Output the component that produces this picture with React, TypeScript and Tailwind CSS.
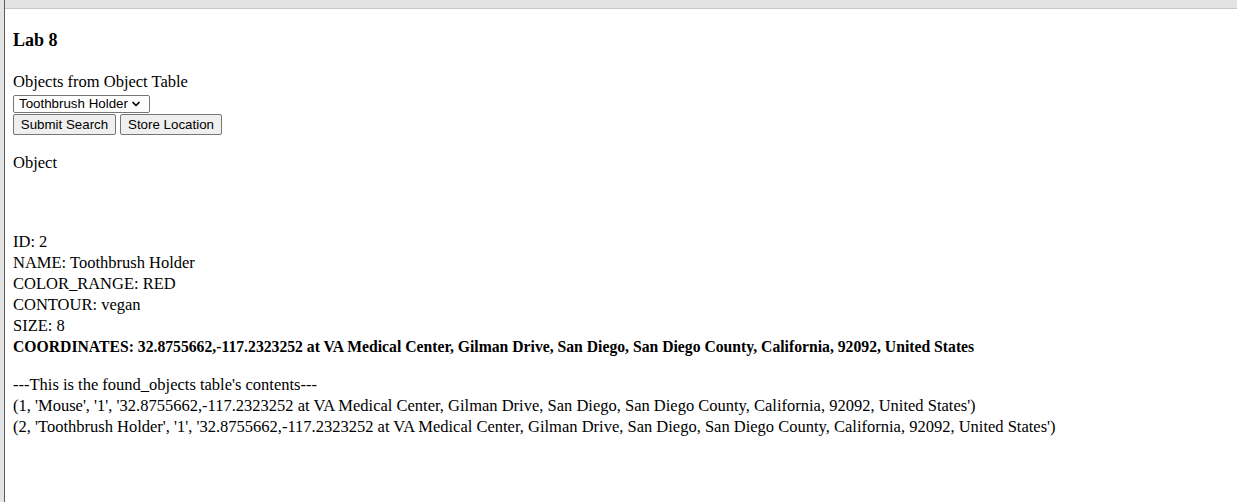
import { ChevronDown } from "lucide-react";

const rows = [
  "(1, 'Mouse', '1', '32.8755662,-117.2323252 at VA Medical Center, Gilman Drive, San Diego, San Diego County, California, 92092, United States')",
  "(2, 'Toothbrush Holder', '1', '32.8755662,-117.2323252 at VA Medical Center, Gilman Drive, San Diego, San Diego County, California, 92092, United States')",
];

export default function App() {
  return (
    <div className="flex h-[502px] w-full bg-white overflow-hidden">
      {/* window chrome edge */}
      <div className="w-[4px] shrink-0 bg-[#e4e4e4]" />
      <div className="w-px shrink-0 bg-[#5c5c5c]" />

      <div className="flex-1 flex flex-col">
        <div className="h-[9px] shrink-0 bg-[#e3e3e3] border-b border-[#c6c6c6]" />

        <div className="pl-[8px] text-black font-['Liberation_Serif',serif] text-[16.5px] leading-[21px]">
          <h3 className="mt-[19px] text-[18px] leading-[24px] font-bold">Lab 8</h3>

          <div className="mt-[19px]">Objects from Object Table</div>

          <div className="mt-[3px] flex h-[18px] w-[137px] items-center justify-between rounded-[2px] border border-[#767676] bg-white pl-[5px] pr-[7px] font-['Liberation_Sans',sans-serif] text-[13.33px] leading-none">
            <span>Toothbrush Holder</span>
            <ChevronDown className="h-[12px] w-[12px]" strokeWidth={3.5} />
          </div>

          <div className="mt-[1px] flex gap-[4px] font-['Liberation_Sans',sans-serif] text-[13.33px] leading-none">
            <button className="h-[21px] w-[103px] rounded-[2px] border border-[#767676] bg-[#efefef]">
              Submit Search
            </button>
            <button className="h-[21px] w-[102px] rounded-[2px] border border-[#767676] bg-[#efefef]">
              Store Location
            </button>
          </div>

          <div className="mt-[17px]">Object</div>

          <div className="mt-[58px]">
            <div>ID: 2</div>
            <div>NAME: Toothbrush Holder</div>
            <div>COLOR_RANGE: RED</div>
            <div>CONTOUR: vegan</div>
            <div>SIZE: 8</div>
            <div className="font-bold text-[15.7px]">
              COORDINATES: 32.8755662,-117.2323252 at VA Medical Center, Gilman Drive, San Diego, San Diego County, California, 92092, United States
            </div>
          </div>

          <div className="mt-[17px]">
            <div>---This is the found_objects table's contents---</div>
            {rows.map((r) => (
              <div key={r}>{r}</div>
            ))}
          </div>
        </div>
      </div>
    </div>
  );
}
